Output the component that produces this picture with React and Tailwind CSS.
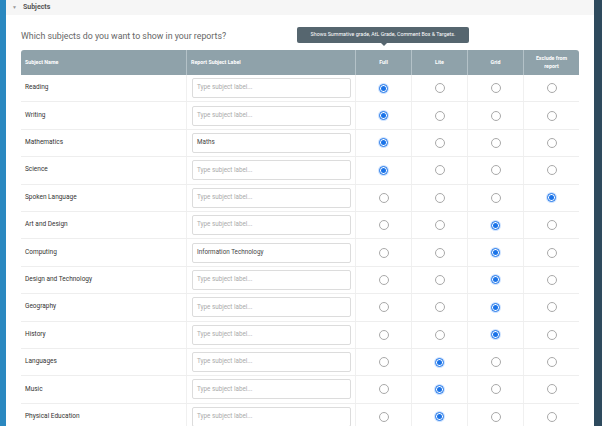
import React from "react";

const rows = [
  ["Reading", "", 0],
  ["Writing", "", 0],
  ["Mathematics", "Maths", 0],
  ["Science", "", 0],
  ["Spoken Language", "", 3],
  ["Art and Design", "", 2],
  ["Computing", "Information Technology", 2],
  ["Design and Technology", "", 2],
  ["Geography", "", 2],
  ["History", "", 2],
  ["Languages", "", 1],
  ["Music", "", 1],
  ["Physical Education", "", 1],
];

function Radio({ on }) {
  return on ? (
    <span className="flex h-[11px] w-[11px] items-center justify-center rounded-full bg-[#cfe3ff]">
      <span className="flex h-[9px] w-[9px] items-center justify-center rounded-full border border-[#1a73e8] bg-white">
        <span className="h-[5px] w-[5px] rounded-full bg-[#1a73e8]" />
      </span>
    </span>
  ) : (
    <span className="h-[10px] w-[10px] rounded-full border border-[#a9a9a9] bg-white" />
  );
}

export default function App() {
  return (
    <div className="flex h-[426px] w-[602px] overflow-hidden bg-white" style={{ fontFamily: "Roboto, 'Liberation Sans', sans-serif" }}>
      <div className="w-[6px] shrink-0 bg-[#2a88c0]" />
      <div className="flex w-[588px] shrink-0 flex-col">
        <div className="flex h-[15px] shrink-0 items-center gap-[6px] bg-[#f6f6f6] pl-[6px]">
          <span className="text-[5px] text-[#999]">▼</span>
          <span className="text-[7px] font-bold text-[#555]">Subjects</span>
        </div>
        <div className="flex flex-col pl-[15px] pt-[17px]">
          <div className="relative h-[18px]">
            <span className="block text-[8.8px] leading-[9px] text-[#666]">Which subjects do you want to show in your reports?</span>
            <div className="absolute left-[276px] top-[-5px] flex h-[16px] w-[172px] items-center justify-center rounded-[2px] bg-[#56666f] text-[5.3px] text-white">
              Shows Summative grade, AtL Grade, Comment Box &amp; Targets.
              <span className="absolute bottom-[-3px] left-[84px] h-0 w-0 border-x-[3px] border-t-[3px] border-x-transparent border-t-[#56666f]" />
            </div>
          </div>
          <div className="w-[558px]">
            <div className="flex h-[25px] overflow-hidden rounded-t-[3px] bg-[#8fa2aa] text-[5.3px] font-bold text-white">
              <div className="flex w-[166px] items-center border-r border-[#b4c2c8] pl-[4px]">Subject Name</div>
              <div className="flex w-[169px] items-center border-r border-[#b4c2c8] pl-[4px]">Report Subject Label</div>
              <div className="flex w-[56px] items-center justify-center border-r border-[#b4c2c8]">Full</div>
              <div className="flex w-[56px] items-center justify-center border-r border-[#b4c2c8]">Lite</div>
              <div className="flex w-[56px] items-center justify-center border-r border-[#b4c2c8]">Grid</div>
              <div className="flex w-[55px] items-center justify-center text-center leading-[1.5]">Exclude from<br />report</div>
            </div>
            {rows.map(([name, label, sel]) => (
              <div key={name} className="flex h-[27.4px] border-b border-[#eeeeee] text-[6.5px] text-[#333]">
                <div className="flex w-[166px] items-center border-r border-[#f0f0f0] pl-[4px]">{name}</div>
                <div className="flex w-[169px] items-center border-r border-[#f0f0f0] pl-[5px]">
                  <div className="flex h-[20px] w-[159px] items-center rounded-[2px] border border-[#dcdcdc] pl-[4px] text-[6.3px]">
                    {label ? <span className="text-[#444]">{label}</span> : <span className="text-[#aaa]">Type subject label...</span>}
                  </div>
                </div>
                {[0, 1, 2, 3].map((i) => (
                  <div key={i} className={"flex items-center justify-center " + (i < 3 ? "w-[56px] border-r border-[#f0f0f0]" : "w-[55px]")}>
                    <Radio on={sel === i} />
                  </div>
                ))}
              </div>
            ))}
          </div>
        </div>
      </div>
      <div className="w-[8px] shrink-0 bg-[#2e4a5d]" />
    </div>
  );
}
